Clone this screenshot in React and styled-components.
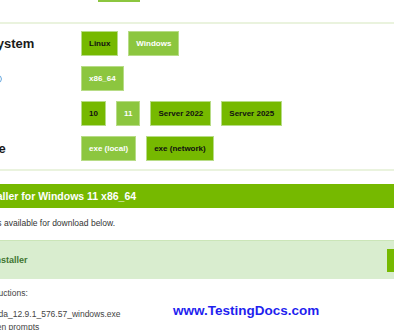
import React from 'react';
import styled, { createGlobalStyle } from 'styled-components';

const GlobalStyle = createGlobalStyle`
  html, body {
    margin: 0;
    padding: 0;
    background: #fff;
    overflow: hidden;
  }
  body {
    font-family: 'Liberation Sans', Arial, sans-serif;
    color: #1a1a1a;
  }
`;

const rows = [
  { label: 'Operating System', options: ['Linux', 'Windows'], selected: 'Linux' },
  { label: 'Architecture', info: true, options: ['x86_64'], selected: null },
  { label: 'Version', options: ['10', '11', 'Server 2022', 'Server 2025'], selected: ['10', 'Server 2022', 'Server 2025'] },
  { label: 'Installer Type', options: ['exe (local)', 'exe (network)'], selected: 'exe (network)' },
];

const isSelected = (row, opt) =>
  Array.isArray(row.selected) ? row.selected.includes(opt) : row.selected === opt;

const App = () => {
  return (
    <>
      <GlobalStyle />
      <Page>
        <Tabs>
          <TabMark />
        </Tabs>
        <Selector>
          {rows.map((row) => (
            <Row key={row.label}>
              <Label>
                {row.label}
                {row.info && (
                  <Info viewBox='0 0 10 10' width='8' height='8'>
                    <circle cx='5' cy='5' r='4.3' fill='none' stroke='#3d8fd6' strokeWidth='1' />
                    <rect x='4.5' y='4.2' width='1' height='3.2' fill='#3d8fd6' />
                    <rect x='4.5' y='2.5' width='1' height='1' fill='#3d8fd6' />
                  </Info>
                )}
              </Label>
              <Options>
                {row.options.map((opt) => (
                  <Option key={opt} $active={isSelected(row, opt)}>
                    {opt}
                  </Option>
                ))}
              </Options>
            </Row>
          ))}
        </Selector>

        <Header>Download Installer for Windows 11 x86_64</Header>
        <Note>The base installer is available for download below.</Note>

        <InstallerBox>
          <InstallerTitle>Base Installer</InstallerTitle>
          <DownloadButton>Download (3.3 GB)</DownloadButton>
        </InstallerBox>

        <Instructions>
          <p>Installation Instructions:</p>
          <ol>
            <li>Double click cuda_12.9.1_576.57_windows.exe</li>
            <li>Follow on-screen prompts</li>
          </ol>
        </Instructions>
      </Page>
      <Watermark>www.TestingDocs.com</Watermark>
    </>
  );
};

export default App;

const Page = styled.main`
  width: 900px;
  margin-left: -77px;
  display: flex;
  flex-direction: column;
`;

const Tabs = styled.nav`
  display: flex;
  height: 24px;
  border-bottom: 2px solid #eaf3de;
  box-sizing: border-box;
`;

const TabMark = styled.span`
  display: block;
  width: 42px;
  height: 2px;
  margin-left: 175px;
  background: #8cc63f;
`;

const Selector = styled.section`
  display: flex;
  flex-direction: column;
  gap: 10px;
  padding: 7px 0 8px;
  border-bottom: 2px solid #eaf3de;
`;

const Row = styled.div`
  display: grid;
  grid-template-columns: 158px 1fr;
  align-items: center;
`;

const Label = styled.div`
  font-size: 13px;
  font-weight: 700;
  color: #1a1a1a;
  white-space: nowrap;
  display: flex;
  align-items: center;
`;

const Info = styled.svg`
  margin-left: -6px;
`;

const Options = styled.div`
  display: flex;
  gap: 10px;
`;

const Option = styled.button`
  height: 25px;
  padding: 0 7px;
  border: 1px solid #b7dc86;
  background: ${(p) => (p.$active ? '#76b900' : '#8cc63f')};
  color: ${(p) => (p.$active ? '#111' : '#fff')};
  font-family: 'Liberation Sans', Arial, sans-serif;
  font-size: 8px;
  font-weight: 700;
  cursor: pointer;
`;

const Header = styled.h2`
  margin: 13px 0 0;
  height: 24px;
  display: flex;
  align-items: center;
  padding-left: 2px;
  background: #76b900;
  color: #fff;
  font-size: 10.5px;
  font-weight: 700;
`;

const Note = styled.p`
  margin: 10px 0 0;
  padding-left: 3px;
  font-size: 8.5px;
  color: #333;
`;

const InstallerBox = styled.div`
  margin-top: 12px;
  height: 39px;
  box-sizing: border-box;
  display: flex;
  align-items: center;
  justify-content: space-between;
  background: #d9edcf;
  border-top: 1px solid #cbe5b8;
  width: 471px;
`;

const InstallerTitle = styled.span`
  padding-left: 46px;
  font-size: 9px;
  font-weight: 700;
  color: #3f7531;
`;

const DownloadButton = styled.button`
  height: 23px;
  width: 80px;
  margin-right: -73px;
  border: none;
  background: #76b900;
  color: #fff;
  font-size: 8px;
  font-weight: 700;
`;

const Instructions = styled.section`
  margin-top: 9px;
  padding-left: 16px;
  font-size: 8.5px;
  color: #444;

  p {
    margin: 0;
  }

  ol {
    margin: 10px 0 0 -7px;
    padding-left: 0;
    list-style-position: inside;
    line-height: 13px;
  }
`;

const Watermark = styled.div`
  position: absolute;
  left: 173px;
  top: 303px;
  font-family: 'Liberation Sans', Arial, sans-serif;
  font-size: 13.5px;
  font-weight: 700;
  color: #1f1fef;
`;
